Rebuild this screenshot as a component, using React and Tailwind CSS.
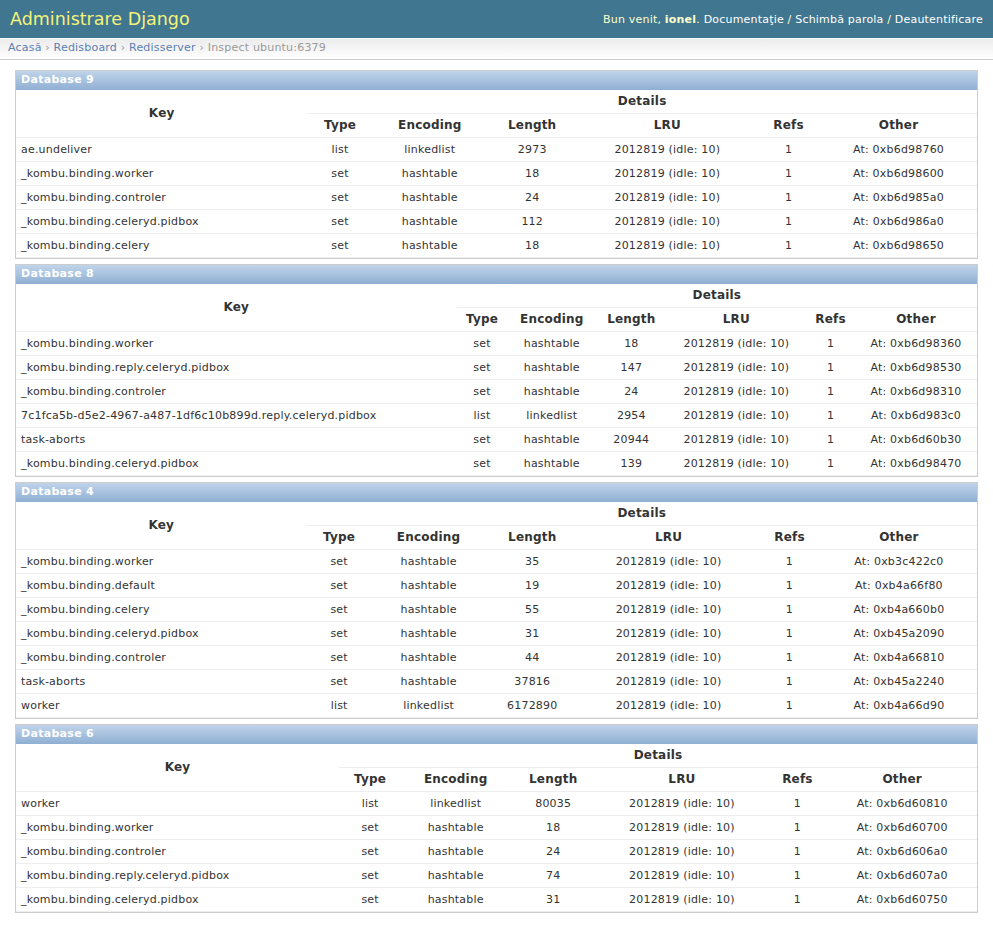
import React from "react";

const L = "2012819 (idle: 10)";
const dbs = [
  {
    name: "Database 9",
    rows: [
      ["ae.undeliver", "list", "linkedlist", "2973", "At: 0xb6d98760"],
      ["_kombu.binding.worker", "set", "hashtable", "18", "At: 0xb6d98600"],
      ["_kombu.binding.controler", "set", "hashtable", "24", "At: 0xb6d985a0"],
      ["_kombu.binding.celeryd.pidbox", "set", "hashtable", "112", "At: 0xb6d986a0"],
      ["_kombu.binding.celery", "set", "hashtable", "18", "At: 0xb6d98650"],
    ],
  },
  {
    name: "Database 8",
    rows: [
      ["_kombu.binding.worker", "set", "hashtable", "18", "At: 0xb6d98360"],
      ["_kombu.binding.reply.celeryd.pidbox", "set", "hashtable", "147", "At: 0xb6d98530"],
      ["_kombu.binding.controler", "set", "hashtable", "24", "At: 0xb6d98310"],
      ["7c1fca5b-d5e2-4967-a487-1df6c10b899d.reply.celeryd.pidbox", "list", "linkedlist", "2954", "At: 0xb6d983c0"],
      ["task-aborts", "set", "hashtable", "20944", "At: 0xb6d60b30"],
      ["_kombu.binding.celeryd.pidbox", "set", "hashtable", "139", "At: 0xb6d98470"],
    ],
  },
  {
    name: "Database 4",
    rows: [
      ["_kombu.binding.worker", "set", "hashtable", "35", "At: 0xb3c422c0"],
      ["_kombu.binding.default", "set", "hashtable", "19", "At: 0xb4a66f80"],
      ["_kombu.binding.celery", "set", "hashtable", "55", "At: 0xb4a660b0"],
      ["_kombu.binding.celeryd.pidbox", "set", "hashtable", "31", "At: 0xb45a2090"],
      ["_kombu.binding.controler", "set", "hashtable", "44", "At: 0xb4a66810"],
      ["task-aborts", "set", "hashtable", "37816", "At: 0xb45a2240"],
      ["worker", "list", "linkedlist", "6172890", "At: 0xb4a66d90"],
    ],
  },
  {
    name: "Database 6",
    rows: [
      ["worker", "list", "linkedlist", "80035", "At: 0xb6d60810"],
      ["_kombu.binding.worker", "set", "hashtable", "18", "At: 0xb6d60700"],
      ["_kombu.binding.controler", "set", "hashtable", "24", "At: 0xb6d606a0"],
      ["_kombu.binding.reply.celeryd.pidbox", "set", "hashtable", "74", "At: 0xb6d607a0"],
      ["_kombu.binding.celeryd.pidbox", "set", "hashtable", "31", "At: 0xb6d60750"],
    ],
  },
];

const th = "px-[5px] py-[5px] text-[12px] leading-[13px] font-bold text-center text-[#333] border-b border-[#eee] tracking-[0.2px]";
const td = "px-[5px] py-[5px] text-[11px] leading-[13px] text-center text-[#333] border-b border-[#eee] whitespace-nowrap tracking-[0.2px]";

function Module({ db }) {
  return (
    <div className="border border-[#ccc] mb-[5px] bg-white">
      <div className="px-[5px] pt-[2px] pb-[3px] text-[11px] leading-[14px] font-bold text-white tracking-[0.3px] bg-gradient-to-b from-[#c0d4ea] to-[#8fafd2]">
        {db.name}
      </div>
      <table className="w-full border-collapse">
        <tbody>
          <tr>
            <th rowSpan={2} className={th + " align-middle"}>Key</th>
            <th colSpan={6} className={th}>Details</th>
          </tr>
          <tr>
            <th className={th}>Type</th>
            <th className={th}>Encoding</th>
            <th className={th}>Length</th>
            <th className={th}>LRU</th>
            <th className={th}>Refs</th>
            <th className={th}>Other</th>
          </tr>
          {db.rows.map((r, i) => (
            <tr key={i}>
              <td className={td + " !text-left"}>{r[0]}</td>
              <td className={td}>{r[1]}</td>
              <td className={td}>{r[2]}</td>
              <td className={td}>{r[3]}</td>
              <td className={td}>{L}</td>
              <td className={td}>1</td>
              <td className={td}>{r[4]}</td>
            </tr>
          ))}
        </tbody>
      </table>
    </div>
  );
}

export default function App() {
  return (
    <div className="font-['DejaVu_Sans',Verdana,sans-serif] text-[#333] bg-white min-h-[947px]">
      <div className="h-[38px] bg-[#417690] flex items-center justify-between px-[10px]">
        <h1 className="text-[17.5px] text-[#f4f379] font-normal leading-[22px]">Administrare Django</h1>
        <div className="text-[11px] text-[#ffc] leading-[14px] pt-[1px] tracking-[0.2px]">
          Bun venit, <strong>ionel</strong>.{" "}
          <span className="text-white">Documentaţie</span> /{" "}
          <span className="text-white">Schimbă parola</span> /{" "}
          <span className="text-white">Deautentificare</span>
        </div>
      </div>
      <div className="border-t border-white border-b border-b-[#ccc] bg-gradient-to-b from-[#ececec] to-white px-[8px] pt-[2px] pb-[4px] text-[11px] leading-[14px] text-[#999] tracking-[0.2px]">
        <span className="text-[#5b80b2]">Acasă</span> › <span className="text-[#5b80b2]">Redisboard</span> ›{" "}
        <span className="text-[#5b80b2]">Redisserver</span> › Inspect ubuntu:6379
      </div>
      <div className="mx-[15px] mt-[10px]">
        {dbs.map((db) => (
          <Module key={db.name} db={db} />
        ))}
      </div>
    </div>
  );
}
